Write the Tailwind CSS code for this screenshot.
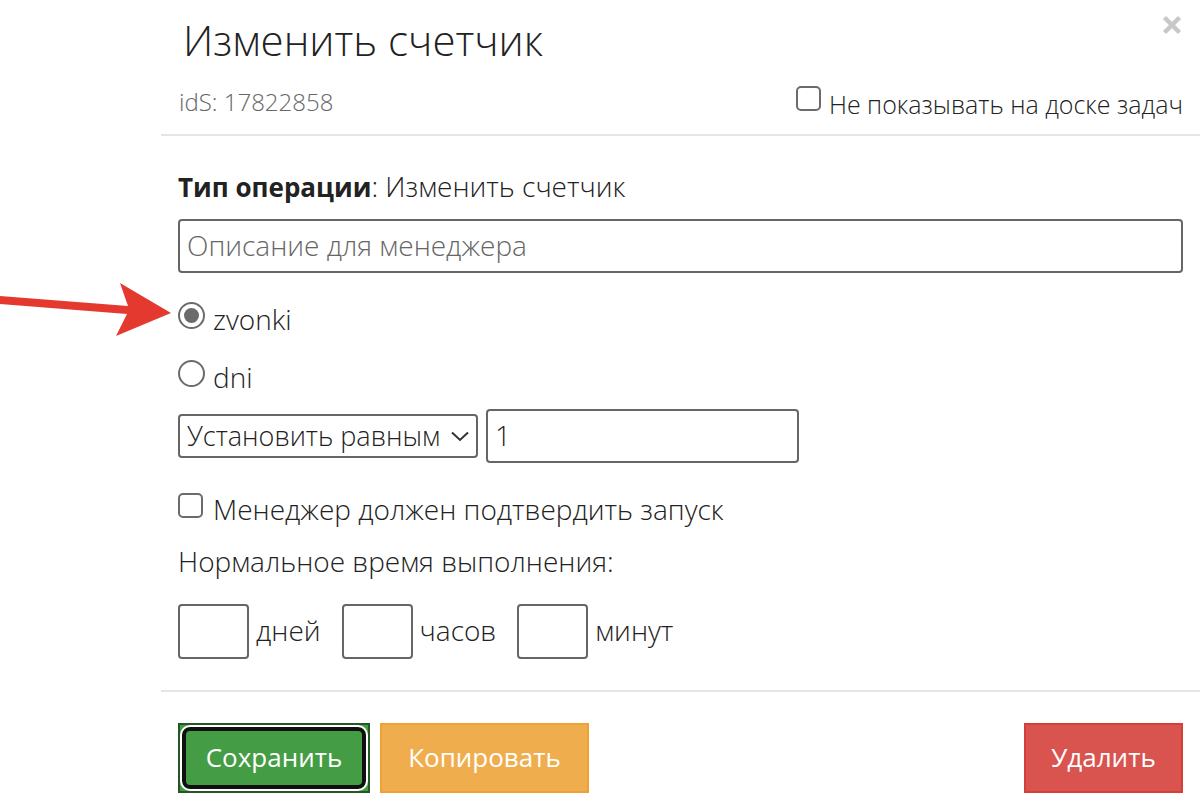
<!doctype html>
<html lang="ru">
  <head>
    <meta charset="UTF-8" />
    <meta name="viewport" content="width=device-width, initial-scale=1.0" />
    <title>Изменить счетчик</title>
    <script src="https://cdn.jsdelivr.net/npm/@tailwindcss/browser@4"></script>
  </head>
  <body class="bg-white text-[#222] font-['Open_Sans',sans-serif] font-light">
    <div class="relative pl-[161px]">
      <!-- стрелка-указатель -->
      <svg class="absolute left-0 top-[280px] w-[172px] h-[60px]" viewBox="0 0 172 60" fill="#e4392e" aria-hidden="true">
        <path d="M0 16 L128 26 L120 3 L171 33 L116 56 L127 34 L0 24 Z" />
      </svg>
      <form>
        <!-- шапка окна -->
        <header class="relative border-b-2 border-[#e5e5e5] pl-[18px] pr-[17px] pt-[18px] pb-[14px]">
          <button type="button" aria-label="Закрыть" class="absolute top-[15px] right-[18px]">
            <svg class="size-[20px]" viewBox="0 0 20 20" fill="none" stroke="#c8c8c8" stroke-width="4.5"><path d="M2.5 2.5 L17.5 17.5 M17.5 2.5 L2.5 17.5" /></svg>
          </button>
          <h1 class="pl-1 text-[42px] leading-11">Изменить счетчик</h1>
          <div class="mt-[24px] flex items-start justify-between leading-8">
            <span class="text-[24px] text-[#666]">idS: 17822858</span>
            <label class="flex items-start gap-2 text-[25px]">
              <input type="checkbox" class="size-[25px] appearance-none rounded-[5px] border-2 border-[#6b6b6b] bg-white" />
              <span class="mt-0.5">Не показывать на доске задач</span>
            </label>
          </div>
        </header>

        <!-- параметры операции -->
        <section class="border-b-2 border-[#e5e5e5] pl-[17px] pr-[17px] pt-[30px] pb-[31px] text-[28px] leading-10">
          <p><b class="text-[26px] font-bold">Тип операции</b>: Изменить счетчик</p>
          <input type="text" aria-label="Описание для менеджера" placeholder="Описание для менеджера" class="mt-3 block h-[54px] w-full rounded-[4px] border-2 border-[#666] px-[7px] pb-[3px] placeholder:text-[#666]" />
          <label class="mt-[26px] flex items-start gap-2">
            <input type="radio" name="counter" checked class="mt-[3px] size-[27px] appearance-none rounded-full border-2 border-[#6b6b6b] bg-clip-content p-1 checked:bg-[#6b6b6b]" />
            <span>zvonki</span>
          </label>
          <label class="mt-[18px] flex items-start gap-2">
            <input type="radio" name="counter" class="mt-[3px] size-[27px] appearance-none rounded-full border-2 border-[#6b6b6b] bg-clip-content p-1 checked:bg-[#6b6b6b]" />
            <span>dni</span>
          </label>
          <div class="mt-3 flex items-center gap-2">
            <div class="relative">
              <select aria-label="Действие" class="block h-11 w-[300px] appearance-none rounded-[4px] border-2 border-[#666] bg-white pl-[7px] pb-[3px] text-[27px]">
                <option>Установить равным</option>
              </select>
              <svg class="pointer-events-none absolute top-[17px] right-[9px] w-[18px] h-[11px]" viewBox="0 0 18 11" fill="none" stroke="#333" stroke-width="2"><path d="M1 1.5 L9 9 L17 1.5" /></svg>
            </div>
            <input type="text" aria-label="Значение" value="1" class="h-[54px] w-[313px] rounded-[4px] border-2 border-[#666] px-[7px] pb-[3px]" />
          </div>
          <label class="mt-[26px] flex items-start gap-2">
            <input type="checkbox" class="mt-1 mr-0.5 size-[25px] appearance-none rounded-[5px] border-2 border-[#6b6b6b] bg-white" />
            <span>Менеджер должен подтвердить запуск</span>
          </label>
          <p class="mt-3">Нормальное время выполнения:</p>
          <div class="mt-[23px] flex items-center gap-[21px]">
            <label class="flex items-center gap-[7px]"><input type="text" class="h-[55px] w-[71px] rounded-[4px] border-2 border-[#666] px-[7px]" /><span class="pb-[3px]">дней</span></label>
            <label class="flex items-center gap-[7px]"><input type="text" class="h-[55px] w-[71px] rounded-[4px] border-2 border-[#666] px-[7px]" /><span class="pb-[3px]">часов</span></label>
            <label class="flex items-center gap-[7px]"><input type="text" class="h-[55px] w-[71px] rounded-[4px] border-2 border-[#666] px-[7px]" /><span class="pb-[3px]">минут</span></label>
          </div>
        </section>

        <footer class="flex gap-[10px] pl-[17px] pr-[17px] pt-[31px] pb-3 text-[26px] leading-10 font-normal text-white">
          <button type="submit" class="h-[70px] w-[192px] border-2 border-[#255625] bg-[#449d44] p-0.5">
            <span class="flex h-full items-center justify-center rounded-[8px] border-4 border-[#101010] pb-[3px] outline-2 outline-white">Сохранить</span>
          </button>
          <button type="button" class="h-[70px] w-[209px] border-2 border-[#eea236] bg-[#f0ad4e] pb-[3px]">Копировать</button>
          <button type="button" class="ml-auto h-[70px] w-[159px] border-2 border-[#d43f3a] bg-[#d9534f] pb-[3px]">Удалить</button>
        </footer>
      </form>
    </div>
  </body>
</html>
